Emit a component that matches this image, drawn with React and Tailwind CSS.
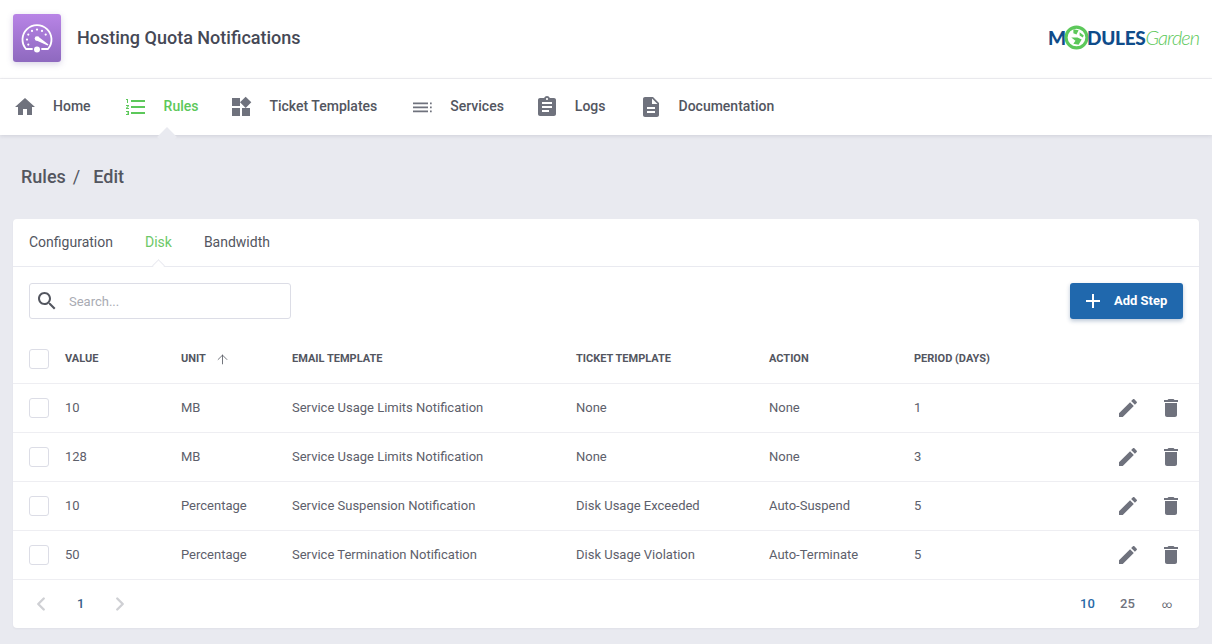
import { ArrowUp, ChevronLeft, ChevronRight } from 'lucide-react';

const paths = {
  home: 'M10 20v-6h4v6h5v-8h3L12 3 2 12h3v8z',
  rules: 'M2 17h2v.5H3v1h1v.5H2v1h3v-4H2v1zm1-9h1V4H2v1h1v3zm-1 3h1.8L2 13.1v.9h3v-1H3.2L5 10.9V10H2v1zm5-6v2h14V5H7zm0 14h14v-2H7v2zm0-6h14v-2H7v2z',
  widgets: 'M13 13v8h8v-8h-8zM3 21h8v-8H3v8zM3 3v8h8V3H3zm13.66-1.31L11 7.34 16.66 13l5.66-5.66-5.66-5.65z',
  services: 'M3 7.5h15v1.7H3zM3 11.5h15v1.7H3zM3 15.5h15v1.7H3zM20 7.5h1.7v1.7H20zM20 11.5h1.7v1.7H20zM20 15.5h1.7v1.7H20z',
  logs: 'M19 3h-4.18C14.4 1.84 13.3 1 12 1c-1.3 0-2.4.84-2.82 2H5c-1.1 0-2 .9-2 2v14c0 1.1.9 2 2 2h14c1.1 0 2-.9 2-2V5c0-1.1-.9-2-2-2zm-7 0c.55 0 1 .45 1 1s-.45 1-1 1-1-.45-1-1 .45-1 1-1zm2 14H7v-2h7v2zm3-4H7v-2h10v2zm0-4H7V7h10v2z',
  docs: 'M14 2H6c-1.1 0-1.99.9-1.99 2L4 20c0 1.1.89 2 1.99 2H18c1.1 0 2-.9 2-2V8l-6-6zm2 16H8v-2h8v2zm0-4H8v-2h8v2zm-3-5V3.5L18.5 9H13z',
  edit: 'M3 17.25V21h3.75L17.81 9.94l-3.75-3.75L3 17.25zM20.71 7.04c.39-.39.39-1.02 0-1.41l-2.34-2.34c-.39-.39-1.02-.39-1.41 0l-1.83 1.83 3.75 3.75 1.83-1.83z',
  trash: 'M6 19c0 1.1.9 2 2 2h8c1.1 0 2-.9 2-2V7H6v12zM19 4h-3.5l-1-1h-5l-1 1H5v2h14V4z',
  search: 'M15.5 14h-.79l-.28-.27C15.41 12.59 16 11.11 16 9.5 16 5.91 13.09 3 9.5 3S3 5.91 3 9.5 5.91 16 9.5 16c1.61 0 3.09-.59 4.23-1.57l.27.28v.79l5 4.99L20.49 19l-4.99-5zm-6 0C7.01 14 5 11.99 5 9.5S7.01 5 9.5 5 14 7.01 14 9.5 11.99 14 9.5 14z',
  plus: 'M19 13h-6v6h-2v-6H5v-2h6V5h2v6h6v2z',
};

function Icon({ name, className }) {
  return (
    <svg viewBox="0 0 24 24" fill="currentColor" className={className}>
      <path d={paths[name]} />
    </svg>
  );
}

const navItems = [
  { label: 'Home', icon: 'home', gap: 'mr-[33px]' },
  { label: 'Rules', icon: 'rules', active: true, gap: 'mr-[31px]' },
  { label: 'Ticket Templates', icon: 'widgets', gap: 'mr-[33px]' },
  { label: 'Services', icon: 'services', gap: 'mr-[31px]' },
  { label: 'Logs', icon: 'logs', gap: 'mr-[33px]' },
  { label: 'Documentation', icon: 'docs', gap: '' },
];

const rows = [
  ['10', 'MB', 'Service Usage Limits Notification', 'None', 'None', '1'],
  ['128', 'MB', 'Service Usage Limits Notification', 'None', 'None', '3'],
  ['10', 'Percentage', 'Service Suspension Notification', 'Disk Usage Exceeded', 'Auto-Suspend', '5'],
  ['50', 'Percentage', 'Service Termination Notification', 'Disk Usage Violation', 'Auto-Terminate', '5'],
];

const cols = 'grid grid-cols-[36px_116px_111px_284px_193px_145px_1fr] items-center';

function Gauge() {
  return (
    <svg viewBox="0 0 48 48" className="w-12 h-12" fill="none" stroke="#fff">
      <path d="M13 35 A14.5 14.5 0 1 1 35 35 H29 M19 35 H13" strokeWidth="1.8" strokeLinecap="round" strokeLinejoin="round" />
      <circle cx="24" cy="35.5" r="3" fill="#fff" stroke="none" />
      <g fill="#fff" stroke="none">
        <circle cx="24" cy="15.6" r="1.1" />
        <circle cx="29" cy="16.9" r="1.1" />
        <circle cx="19" cy="16.9" r="1.1" />
        <circle cx="32.7" cy="20.6" r="1.1" />
        <circle cx="15.3" cy="20.6" r="1.1" />
        <circle cx="14" cy="25.6" r="1.1" />
        <circle cx="15.3" cy="30.6" r="1.1" />
        <circle cx="24" cy="24.5" r="2.3" />
        <path d="M22.5 26 L25 22.5 L35.5 30.5 L34.5 31.5z" />
      </g>
    </svg>
  );
}

function Logo() {
  return (
    <div className="flex items-center font-['Lato','Liberation_Sans',sans-serif] leading-none mb-[2px]">
      <span className="text-[19px] font-black text-[#0f4c8a]">M</span>
      <svg viewBox="0 0 24 24" className="w-[25px] h-[25px] -mx-[2px] shrink-0">
        <circle cx="12" cy="12" r="10" fill="#fff" stroke="#5cc85a" strokeWidth="3" />
        <path d="M9 4 L14 5 L12 9 L9 8z M15 7 L19 10 L18 12 L15 10z M7 12 L13 12 L17 14 L14 19 L9 18 L11 15z" fill="#5cc85a" />
      </svg>
      <span className="text-[19px] font-black tracking-[-0.3px] text-[#0f4c8a]">DULES</span>
      <span className="text-[20px] font-light italic tracking-[-1px] text-[#5cc85a]">Garden</span>
    </div>
  );
}

function Checkbox() {
  return <span className="block w-5 h-5 rounded-[3px] border border-[#dcdde6] bg-white" />;
}

export default function App() {
  return (
    <div className="min-h-[644px] bg-[#e9eaf0] font-['Roboto',sans-serif] text-[#4b4f5c] overflow-hidden">
      <header className="h-[79px] bg-white border-b border-[#f0f0f3] flex items-center justify-between px-[13px] pb-[2px]">
        <div className="flex items-center gap-4">
          <div className="w-12 h-12 rounded-[3px] bg-gradient-to-b from-[#b884e6] to-[#8e69bf] shadow-[0_2px_6px_rgba(100,80,150,0.25)]">
            <Gauge />
          </div>
          <h1 className="text-[18px] font-medium text-[#454855] pb-[2px]">Hosting Quota Notifications</h1>
        </div>
        <Logo />
      </header>

      <nav className="relative h-[56px] bg-white flex items-center pl-[13px] shadow-[0_1px_4px_rgba(60,60,90,0.15)]">
        {navItems.map((item) => (
          <div key={item.label} className={`relative flex items-center gap-[16px] ${item.gap}`}>
            <Icon name={item.icon} className={`w-6 h-6 ${item.active ? 'text-[#5cc85a]' : 'text-[#6f727d]'}`} />
            <span className={`text-[14px] font-medium pb-[2px] ${item.active ? 'text-[#5cc85a]' : 'text-[#53565f]'}`}>{item.label}</span>
            {item.active && (
              <span className="absolute left-[36px] top-[35px] w-[14px] h-[14px] rotate-45 bg-[#e9eaf0]" />
            )}
          </div>
        ))}
      </nav>

      <div className="pt-[28px] pl-[21px] h-[84px] text-[18px] font-medium text-[#53565f] flex items-start gap-[7px]">
        <span>Rules</span>
        <span className="font-normal">/</span>
        <span className="ml-[6px]">Edit</span>
      </div>

      <main className="mx-[13px] bg-white rounded-[4px] h-[409px] shadow-[0_1px_2px_rgba(60,60,90,0.05)]">
        <div className="h-[48px] border-b border-[#e9eaf0] flex items-center pl-[16px] gap-[32px] text-[14px] text-[#53565f]">
          <span>Configuration</span>
          <span className="relative text-[#6cc868]">
            Disk
            <span className="absolute left-[9px] top-[29px] w-[9px] h-[9px] rotate-45 bg-white border-l border-t border-[#e9eaf0]" />
          </span>
          <span>Bandwidth</span>
        </div>

        <div className="flex items-center justify-between px-[16px] pt-[16px]">
          <div className="w-[262px] h-[36px] rounded-[3px] border border-[#dcdde6] flex items-center pl-[5px] gap-[10px]">
            <Icon name="search" className="w-6 h-6 text-[#53565f]" />
            <span className="text-[13px] text-[#a9abb3] pt-[2px]">Search...</span>
          </div>
          <button className="w-[113px] h-[36px] rounded-[3px] bg-[#2068ad] text-white flex items-center pl-[11px] gap-[9px] text-[13px] font-bold shadow-[0_2px_4px_rgba(30,70,120,0.3)]">
            <Icon name="plus" className="w-6 h-6" />
            Add Step
          </button>
        </div>

        <div className={`${cols} h-[49px] mt-[16px] pl-[16px] border-b border-[#eeeef2] text-[11px] font-bold text-[#53565f]`}>
          <Checkbox />
          <span>VALUE</span>
          <span className="flex items-center gap-[9px]">
            UNIT
            <ArrowUp className="w-[15px] h-[15px] text-[#53565f]" strokeWidth={1.3} />
          </span>
          <span>EMAIL TEMPLATE</span>
          <span>TICKET TEMPLATE</span>
          <span>ACTION</span>
          <span>PERIOD (DAYS)</span>
        </div>

        {rows.map((r, i) => (
          <div key={i} className={`${cols} h-[49px] px-[16px] border-b border-[#eeeef2] text-[13px] text-[#5d606b]`}>
            <Checkbox />
            <span>{r[0]}</span>
            <span>{r[1]}</span>
            <span>{r[2]}</span>
            <span>{r[3]}</span>
            <span>{r[4]}</span>
            <div className="flex items-center justify-between">
              <span>{r[5]}</span>
              <div className="flex items-center gap-[19px]">
                <Icon name="edit" className="w-6 h-6 text-[#6f727d]" />
                <Icon name="trash" className="w-6 h-6 text-[#6f727d]" />
              </div>
            </div>
          </div>
        ))}

        <div className="h-[48px] flex items-center justify-between pl-[17px] pr-[28px] text-[13px]">
          <div className="flex items-center">
            <ChevronLeft className="w-[22px] h-[22px] text-[#cfd0d4]" strokeWidth={2.6} />
            <span className="ml-[25px] text-[#3a5f8a] font-medium">1</span>
            <ChevronRight className="w-[22px] h-[22px] ml-[25px] text-[#cfd0d4]" strokeWidth={2.6} />
          </div>
          <div className="flex items-center">
            <span className="w-[40px] text-[#2a6aa8] font-medium">10</span>
            <span className="w-[42px] text-[#6f727d] font-medium">25</span>
            <span className="w-[9px] text-[10px] text-[#5d606b]">∞</span>
          </div>
        </div>
      </main>
    </div>
  );
}
